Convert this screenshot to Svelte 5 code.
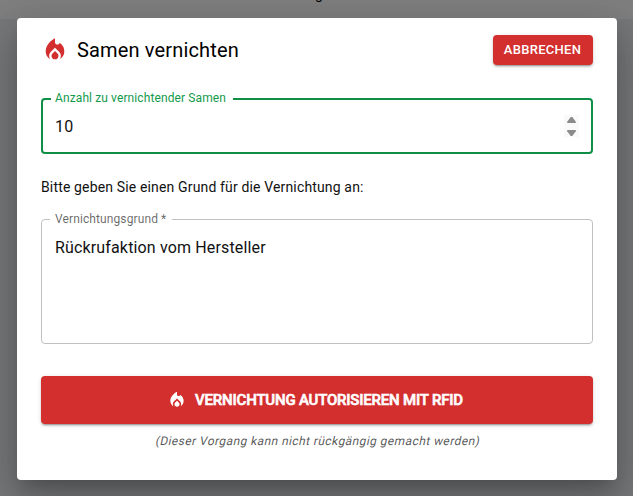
<script>
  let amount = $state('10');
  let reason = $state('Rückrufaktion vom Hersteller');
</script>

{#snippet fire(size)}
  <svg width={size} height={size} viewBox="0 0 24 24" fill="currentColor" aria-hidden="true">
    <path d="m12 12.9-2.13 2.09c-.56.56-.87 1.29-.87 2.07C9 18.68 10.35 20 12 20s3-1.32 3-2.94c0-.78-.31-1.52-.87-2.07L12 12.9z" />
    <path d="m16 6-.44.55C14.38 8.02 12 7.19 12 5.3V2S4 6 4 13c0 2.92 1.56 5.47 3.89 6.86-.56-.79-.89-1.76-.89-2.8 0-1.32.52-2.56 1.47-3.5L12 10.1l3.53 3.47c.95.93 1.47 2.17 1.47 3.5 0 1.02-.31 1.96-.85 2.75 1.89-1.15 3.29-3.06 3.71-5.3.66-3.55-1.07-6.9-3.86-8.52z" />
  </svg>
{/snippet}

<div class="page">
  <div class="topbar"><span class="page-title">g</span></div>
  <div class="overlay">
    <div class="dialog" role="dialog" aria-modal="true">
      <header>
        <span class="flame">{@render fire(28)}</span>
        <h2>Samen vernichten</h2>
        <button class="cancel">Abbrechen</button>
      </header>

      <fieldset class="field focused">
        <legend>Anzahl zu vernichtender Samen</legend>
        <div class="number">
          <input bind:value={amount} aria-label="Anzahl zu vernichtender Samen" />
          <span class="spinner">
            <svg width="15" height="22" viewBox="0 0 15 22" fill="#8b8b8b">
              <path d="M3.2 8V6.8L6.7 2h1.6l3.5 4.8V8z" />
              <path d="M3.2 15v1.2L6.7 21h1.6l3.5-4.8V15z" />
            </svg>
          </span>
        </div>
      </fieldset>

      <p class="prompt">Bitte geben Sie einen Grund für die Vernichtung an:</p>

      <fieldset class="field reason">
        <legend>Vernichtungsgrund *</legend>
        <textarea bind:value={reason} aria-label="Vernichtungsgrund"></textarea>
      </fieldset>

      <button class="confirm">
        {@render fire(20)}
        <span>Vernichtung autorisieren mit RFID</span>
      </button>
      <p class="note">(Dieser Vorgang kann nicht rückgängig gemacht werden)</p>
    </div>
  </div>
</div>

<style>
  .page {
    position: relative;
    height: 496px;
    overflow: hidden;
    background: #eff1f5;
    font-family: Roboto, 'Liberation Sans', sans-serif;
    color: #111;
  }
  .topbar {
    display: flex;
    justify-content: center;
    height: 19px;
    background: #fff;
  }
  .page-title {
    margin-top: -14px;
    font-size: 14px;
    line-height: 16px;
    height: 16px;
    padding-left: 5px;
    color: #000;
  }
  .overlay {
    position: absolute;
    inset: 0;
    box-sizing: border-box;
    padding: 18px 16px 16px 17px;
    background: rgba(0, 0, 0, 0.5);
  }
  .dialog {
    box-sizing: border-box;
    height: 462px;
    padding: 17px 24px 0;
    background: #fff;
    border-radius: 4px;
    box-shadow:
      0 11px 15px -7px rgba(0, 0, 0, 0.2),
      0 24px 38px 3px rgba(0, 0, 0, 0.14),
      0 9px 46px 8px rgba(0, 0, 0, 0.12);
  }
  header {
    display: flex;
    align-items: center;
    height: 30px;
  }
  .flame {
    display: flex;
    color: #d32f2f;
  }
  h2 {
    flex: 1;
    margin: 0 0 0 8px;
    font-size: 20px;
    font-weight: 400;
    line-height: 32px;
    letter-spacing: 0.15px;
    color: #000;
  }
  button {
    display: flex;
    align-items: center;
    justify-content: center;
    border: 0;
    border-radius: 4px;
    background: #d32f2f;
    color: #fff;
    font-family: inherit;
    text-transform: uppercase;
    box-shadow:
      0 3px 1px -2px rgba(0, 0, 0, 0.2),
      0 2px 2px rgba(0, 0, 0, 0.14),
      0 1px 5px rgba(0, 0, 0, 0.12);
  }
  .cancel {
    width: 100px;
    height: 30px;
    padding: 0 1px 2px 0;
    font-size: 13px;
    font-weight: 500;
    letter-spacing: 0.3px;
  }
  .field {
    box-sizing: border-box;
    min-width: 0;
    margin: 0;
    padding: 0 8px;
    border: 1px solid #c0c0c0;
    border-radius: 4px;
  }
  legend {
    height: 12px;
    padding: 0 6px 0 5px;
    font-size: 12px;
    line-height: 12px;
    letter-spacing: 0.11px;
    color: rgba(0, 0, 0, 0.6);
  }
  .focused {
    height: 61px;
    margin-top: 28px;
    border: 2px solid #0f8f46;
  }
  .focused legend {
    padding: 0 7px 0 4px;
    line-height: 10px;
    color: #139a4c;
  }
  .number {
    display: flex;
    align-items: center;
    justify-content: space-between;
    height: 42px;
    padding: 0 4px;
  }
  input,
  textarea {
    min-width: 0;
    padding: 0;
    border: 0;
    outline: 0;
    background: transparent;
    color: inherit;
    font: 16px/23px Roboto, 'Liberation Sans', sans-serif;
    letter-spacing: 0.15px;
  }
  input {
    flex: 1;
  }
  .spinner {
    display: flex;
    background: #fafafa;
  }
  .prompt {
    margin: 23px 0 0;
    font-size: 14px;
    line-height: 20px;
    letter-spacing: 0.15px;
  }
  .reason {
    height: 131px;
    margin-top: 16px;
  }
  textarea {
    display: block;
    box-sizing: border-box;
    width: 100%;
    height: 110px;
    padding: 11px 5px 0;
    resize: none;
    overflow: hidden;
  }
  .confirm {
    width: 100%;
    height: 48px;
    margin-top: 32px;
    padding: 0 4px 0 0;
    gap: 8px;
    font-size: 15px;
    font-weight: 500;
    line-height: 26px;
    letter-spacing: -0.2px;
    -webkit-text-stroke: 0.6px currentColor;
  }
  .note {
    margin: 7px 0 0;
    padding-left: 2px;
    text-align: center;
    font-size: 12px;
    line-height: 20px;
    letter-spacing: 0.42px;
    color: rgba(0, 0, 0, 0.68);
    transform: skewX(-12deg);
  }
</style>
